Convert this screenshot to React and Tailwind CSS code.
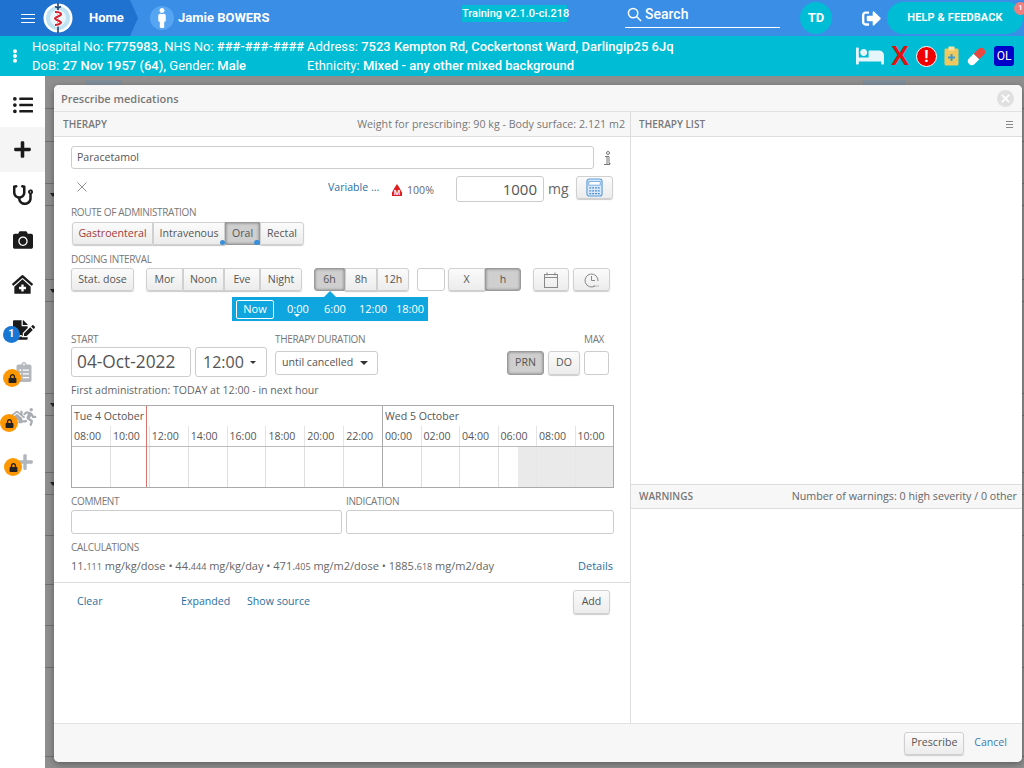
import * as React from "react";
import {
  FaListUl,
  FaPlus,
  FaStethoscope,
  FaCamera,
  FaClinicMedical,
  FaFileSignature,
  FaClipboardList,
  FaRunning,
  FaHome,
  FaLock,
  FaBed,
  FaMale,
  FaSignOutAlt,
  FaEllipsisV,
} from "react-icons/fa";

const backdropRows = [
  { id: 1, className: "h-[33px]" },
  { id: 2, className: "h-[33px]" },
  { id: 3, className: "h-[42px]" },
  { id: 4, className: "h-[22px]", arrow: true },
  { id: 5, className: "h-[74px]" },
  { id: 6, className: "h-[22px]", arrow: true },
  { id: 7, className: "h-[92px]" },
  { id: 8, className: "h-[22px]", arrow: true },
  { id: 9, className: "h-[57px]" },
  { id: 10, className: "h-[22px]", arrow: true },
  { id: 11, className: "h-[41px]" },
  { id: 12, className: "h-[49px]" },
  { id: 13, className: "h-[41px]" },
  { id: 14, className: "h-[42px]" },
  { id: 15, className: "h-[89px]" },
];

const hours = [
  ["08:00", "10:00", "12:00", "14:00", "16:00", "18:00", "20:00", "22:00"],
  ["00:00", "02:00", "04:00", "06:00", "08:00", "10:00"],
];

const Btn = ({ className = "", active = false, children }) => (
  <div
    className={
      "flex items-center justify-center text-[10.6px] text-[#555] border h-full " +
      (active
        ? "bg-[#cfcfcf] border-[#9a9a9a] shadow-[inset_0_0_3px_#777] "
        : "bg-gradient-to-b from-[#fbfbfb] to-[#ececec] border-[#d0d0d0] shadow-[0_1px_1px_#ccc] ") +
      className
    }
  >
    {children}
  </div>
);

const Label = ({ className = "", children }) => (
  <div className={"text-[10px] leading-[12px] text-[#777] uppercase tracking-[-0.35px] " + className}>
    {children}
  </div>
);

const Logo = () => (
  <svg viewBox="0 0 30 30" className="w-[30px] h-[30px]">
    <circle cx="15" cy="15" r="14.5" fill="#fff" />
    <circle cx="15" cy="15" r="12" fill="#bfe3f2" />
    <circle cx="15" cy="15" r="8" fill="#eaf6fb" />
    <path d="M15 0v30" stroke="#24466e" strokeWidth="1.6" />
    <path d="M12 9c4 0 6 1 6 2.5S12 14 12 15.5 18 18 18 19.5 14 22 12 22" stroke="#fff" strokeWidth="4" fill="none" />
    <path d="M12 9c4 0 6 1 6 2.5S12 14 12 15.5 18 18 18 19.5 14 22 12 22" stroke="#d5232f" strokeWidth="2.2" fill="none" />
    <path d="M12 3.5l3 1.5 3-1.5" stroke="#24466e" strokeWidth="1.4" fill="none" />
  </svg>
);

const CalcIcon = () => (
  <svg viewBox="0 0 18 20" className="w-[17px] h-[19px]">
    <rect x="1" y="1" width="16" height="18" rx="2.5" fill="#dbe9f8" stroke="#5b9bd8" strokeWidth="1.2" />
    <rect x="3" y="3.5" width="12" height="4" fill="#fff" stroke="#5b9bd8" strokeWidth="0.8" />
    <path d="M3.5 10.5h11M3.5 13.5h11M3.5 16.5h11" stroke="#4a8cd0" strokeWidth="1.3" strokeDasharray="2 1" />
  </svg>
);

const PillIcon = () => (
  <svg viewBox="0 0 24 24" className="w-[21px] h-[21px]">
    <g transform="rotate(-45 12 12)">
      <path d="M12 7.5H4.5a4.5 4.5 0 0 0 0 9H12z" fill="#fff" />
      <path d="M12 7.5h7.5a4.5 4.5 0 0 1 0 9H12z" fill="#e9473f" />
    </g>
  </svg>
);

const ClipIcon = () => (
  <svg viewBox="0 0 15 20" className="w-[15px] h-[20px]">
    <rect x="0.5" y="2.5" width="14" height="17" rx="1.5" fill="#efc95d" />
    <rect x="4.5" y="0.5" width="6" height="4" fill="#f7e3a2" />
    <path d="M7.5 8v7M4 11.5h7" stroke="#3f9bc4" strokeWidth="2" />
  </svg>
);

const MedalIcon = () => (
  <svg viewBox="0 0 12 12" className="w-[12px] h-[12px]">
    <path d="M6 0l2 3 3 5.5V12H1V8.5L4 3z" fill="#e01e1e" />
    <text x="6" y="11" textAnchor="middle" fontSize="7" fontWeight="700" fill="#fff">
      M
    </text>
  </svg>
);

const CalendarIcon = () => (
  <svg viewBox="0 0 16 16" className="w-[16px] h-[16px]" fill="none" stroke="#888" strokeWidth="1">
    <rect x="1.5" y="2.5" width="13" height="13" />
    <path d="M1.5 5.5h13M4 0.5v3M12 0.5v3" />
  </svg>
);

const ClockIcon = () => (
  <svg viewBox="0 0 16 16" className="w-[16px] h-[16px]" fill="none" stroke="#888" strokeWidth="1">
    <path d="M11 14a6.5 6.5 0 1 1 3-5" />
    <path d="M7.5 4v4.5h3.5" />
    <path d="M9.5 14h5" strokeDasharray="1 1" />
  </svg>
);

const InfoIcon = () => (
  <svg viewBox="0 0 8 14" className="w-[8px] h-[14px]" fill="none" stroke="#777" strokeWidth="1">
    <circle cx="5" cy="2" r="1.5" />
    <path d="M2 5.5h4v7H7.5M1 13.5h6M4 6v7" />
  </svg>
);

const Sidebar = () => (
  <div className="w-[45px] shrink-0 bg-white pt-[6px] flex flex-col text-[#1b1b1b]">
    <div className="h-[45px] flex items-center justify-center text-[20px]">
      <FaListUl />
    </div>
    <div className="h-[45px] flex items-center justify-center text-[19px] bg-[#f5f5f5]">
      <FaPlus />
    </div>
    <div className="h-[45px] flex items-center justify-center text-[20px]">
      <FaStethoscope />
    </div>
    <div className="h-[45px] flex items-center justify-center text-[20px]">
      <FaCamera />
    </div>
    <div className="h-[45px] flex items-center justify-center text-[21px]">
      <FaClinicMedical />
    </div>
    <div className="relative h-[45px] flex items-center justify-center text-[22px] pl-[2px]">
      <FaFileSignature />
      <div className="absolute left-[3px] top-[19px] w-[17px] h-[17px] rounded-full bg-[#1976d2] text-white text-[11px] font-bold flex items-center justify-center font-['Roboto',sans-serif]">
        1
      </div>
    </div>
    <div className="relative h-[45px] flex items-center justify-center text-[20px] pl-[3px] pb-[6px] text-[#b4b8bd]">
      <FaClipboardList />
      <div className="absolute left-[3px] top-[17px] w-[18px] h-[18px] rounded-full bg-[#ff9800] text-[#222] text-[9px] flex items-center justify-center">
        <FaLock />
      </div>
    </div>
    <div className="relative h-[45px] flex items-center justify-center text-[18px] pl-[2px] pb-[5px] text-[#a9adb2]">
      <FaHome className="text-[16px] mr-[-5px]" />
      <FaRunning />
      <div className="absolute left-0 top-[17px] w-[18px] h-[18px] rounded-full bg-[#ff9800] text-[#222] text-[9px] flex items-center justify-center">
        <FaLock />
      </div>
    </div>
    <div className="relative h-[45px] flex items-center justify-center text-[18px] pl-[5px] pb-[6px] text-[#b0b6bc]">
      <FaPlus />
      <div className="absolute left-[4px] top-[16px] w-[18px] h-[18px] rounded-full bg-[#ff9800] text-[#222] text-[9px] flex items-center justify-center">
        <FaLock />
      </div>
    </div>
  </div>
);

const Header = () => (
  <div className="h-9 bg-[#3a8ee6] flex items-center text-white font-['Roboto',sans-serif] shrink-0">
    <div className="w-[138px] h-full bg-[#1f72cf] [clip-path:polygon(0_0,130px_0,100%_50%,130px_100%,0_100%)] flex items-center shrink-0">
      <div className="ml-[21px] w-[14px] flex flex-col gap-[3px]">
        <div className="h-px bg-white" />
        <div className="h-px bg-white" />
        <div className="h-px bg-white" />
      </div>
      <div className="ml-[8px]">
        <Logo />
      </div>
      <div className="ml-[16px] text-[13px] font-bold">Home</div>
    </div>
    <div className="ml-[12px] w-[24px] h-[24px] rounded-full bg-[#56a5f2] flex items-center justify-center text-[20px] shrink-0">
      <FaMale />
    </div>
    <div className="ml-[4px] text-[13px] font-bold w-[284px] whitespace-nowrap">Jamie BOWERS</div>
    <div className="w-[163px] h-full pt-[5px] shrink-0">
      <div className="w-[105px] h-[17px] bg-[#00bcd4] text-[11px] leading-[17px] font-medium whitespace-nowrap text-center">
        Training v2.1.0-ci.218
      </div>
    </div>
    <div className="w-[155px] h-[27px] border-b border-white flex items-center gap-[3px] pl-[2px] pt-[1px] shrink-0 text-[14px] font-medium self-start mt-[1px]">
      <svg viewBox="0 0 16 16" className="w-[15px] h-[15px]" fill="none" stroke="#fff" strokeWidth="1.6">
        <circle cx="6.5" cy="6.5" r="5" />
        <path d="M10.2 10.2L15 15" />
      </svg>
      Search
    </div>
    <div className="ml-[20px] w-[32px] h-[32px] rounded-full bg-[#00bcd4] flex items-center justify-center text-[13px] font-bold shrink-0">
      TD
    </div>
    <div className="ml-[30px] text-[19px] shrink-0">
      <FaSignOutAlt />
    </div>
    <div className="relative ml-[6px] w-[136px] h-[32px] rounded-full bg-[#00bcd4] flex items-center justify-center text-[11px] font-bold tracking-[0.1px] shrink-0">
      HELP &amp; FEEDBACK
      <div className="absolute right-[-4px] top-0 w-[13px] h-[13px] rounded-full bg-[#ef7f7f] text-[7px] flex items-center justify-center">
        1
      </div>
    </div>
  </div>
);

const PatientBar = () => (
  <div className="h-10 bg-[#00bcd4] flex items-center text-white text-[13px] leading-[19px] font-['Roboto',sans-serif] shrink-0 whitespace-nowrap">
    <div className="w-[32px] flex justify-center text-[14px] shrink-0 pr-[2px]">
      <FaEllipsisV />
    </div>
    <div className="w-[275px] shrink-0">
      <div>
        Hospital No: <span className="font-medium">F775983,</span> NHS No: <span className="font-medium">###-###-####</span>
      </div>
      <div>
        DoB: <span className="font-medium">27 Nov 1957 (64),</span> Gender: <span className="font-medium">Male</span>
      </div>
    </div>
    <div className="w-[516px] shrink-0">
      <div>
        Address: <span className="font-medium">7523 Kempton Rd, Cockertonst Ward, Darlingip25 6Jq</span>
      </div>
      <div>
        Ethnicity: <span className="font-medium">Mixed - any other mixed background</span>
      </div>
    </div>
    <div className="flex items-center gap-[7px] shrink-0 pl-[33px]">
      <FaBed className="text-[#e5f5fa] text-[28px]" />
      <span className="text-[#e01212] text-[27px] leading-none font-bold font-['Liberation_Sans',sans-serif]">X</span>
      <div className="w-[21px] h-[21px] rounded-full bg-[#f00000] border border-white flex items-center justify-center text-[16px] font-bold">
        !
      </div>
      <ClipIcon />
      <PillIcon />
      <div className="w-[20px] h-[20px] rounded-[3px] bg-[#0000c8] flex items-center justify-center text-[12px]">
        OL
      </div>
    </div>
  </div>
);

const Timeline = () => (
  <div className="relative mt-[7px] w-[543px] h-[83px] border border-[#aaa] flex text-[10.6px] text-[#555]">
    <div className="w-[311px] border-r border-[#aaa] flex flex-col shrink-0">
      <div className="h-[20px] leading-[20px] pl-[2px]">Tue 4 October</div>
      <div className="h-[21px] flex border-b border-[#bbb]">
        {hours[0].map((hour) => (
          <div key={hour} className="flex-1 border-r last:border-r-0 border-[#e4e4e4] pl-[2px] leading-[21px]">
            {hour}
          </div>
        ))}
      </div>
      <div className="flex-1 flex">
        {hours[0].map((hour) => (
          <div key={hour} className="flex-1 border-r last:border-r-0 border-[#dedede]" />
        ))}
      </div>
    </div>
    <div className="flex-1 flex flex-col">
      <div className="h-[20px] leading-[20px] pl-[2px]">Wed 5 October</div>
      <div className="h-[21px] flex border-b border-[#bbb]">
        {hours[1].map((hour) => (
          <div key={hour} className="flex-1 border-r last:border-r-0 border-[#e4e4e4] pl-[2px] leading-[21px]">
            {hour}
          </div>
        ))}
      </div>
      <div className="flex-1 flex">
        {hours[1].map((hour) => (
          <div key={hour} className="flex-1 border-r last:border-r-0 border-[#dedede]" />
        ))}
      </div>
    </div>
    <div className="absolute left-[74px] top-0 bottom-0 w-px bg-[#d9736b]" />
    <div className="absolute left-[446px] right-0 top-[41px] bottom-0 bg-[#e8e8e8]/90" />
  </div>
);

const TherapyPane = () => (
  <div className="w-[577px] shrink-0 border-r border-[#ddd] flex flex-col">
    <div className="h-[25px] px-[9px] bg-[#f7f7f7] border-b border-[#ddd] flex items-center justify-between shrink-0">
      <div className="text-[10px] font-semibold text-[#777]">THERAPY</div>
      <div className="text-[10.7px] text-[#777] mr-[-4px]">Weight for prescribing: 90 kg - Body surface: 2.121 m2</div>
    </div>
    <div className="pl-[17px] pr-[16px] pt-[9px] shrink-0">
      <div className="flex items-center">
        <div className="w-[523px] h-[23px] border border-[#ccc] rounded-[3px] pl-[5px] text-[10.6px] leading-[20px] text-[#555]">
          Paracetamol
        </div>
        <div className="ml-[9px] flex">
          <InfoIcon />
        </div>
      </div>
      <div className="flex items-start mt-[7px] h-[26px]">
        <svg viewBox="0 0 10 10" className="w-[10px] h-[10px] ml-[6px] mt-[6px]" fill="none" stroke="#888" strokeWidth="0.9">
          <path d="M0.5 0.5l9 9M9.5 0.5l-9 9" />
        </svg>
        <div className="ml-[241px] w-[50px] text-[10.6px] leading-[22px] text-[#2b6f9f] whitespace-nowrap">Variable ...</div>
        <div className="ml-[13px] mt-[8px] flex">
          <MedalIcon />
        </div>
        <div className="ml-[4px] w-[28px] text-[10.6px] leading-[28px] text-[#666]">100%</div>
        <div className="ml-[21px] w-[88px] h-[26px] border border-[#ccc] rounded-[3px] text-right pr-[6px] text-[15px] leading-[24px] text-[#555]">
          1000
        </div>
        <div className="ml-[4px] w-[24px] text-[14px] leading-[26px] text-[#666]">mg</div>
        <div className="ml-[4px] h-[23px] w-[37px] rounded-[2px]">
          <Btn className="rounded-[3px]">
            <CalcIcon />
          </Btn>
        </div>
      </div>
      <Label className="mt-[4px]">Route of administration</Label>
      <div className="flex h-[23px] mt-[4px] ml-[1px] w-fit">
        <Btn className="w-[81px] rounded-l-[3px] !text-[#a23a3a]">Gastroenteral</Btn>
        <div className="relative w-[72px] h-full">
          <Btn>Intravenous</Btn>
          <div className="absolute right-0 bottom-0 w-[5px] h-[5px] rounded-full bg-[#3b8fd8]" />
        </div>
        <div className="relative w-[35px] h-full">
          <Btn active>Oral</Btn>
          <div className="absolute right-0 bottom-0 w-[6px] h-[5px] rounded-full bg-[#3b8fd8]" />
        </div>
        <Btn className="w-[44px] rounded-r-[3px]">Rectal</Btn>
      </div>
      <Label className="mt-[8px]">Dosing interval</Label>
      <div className="flex h-[23px] mt-[3px]">
        <Btn className="w-[63px] rounded-[3px]">Stat. dose</Btn>
        <Btn className="ml-[12px] w-[37px] rounded-l-[3px]">Mor</Btn>
        <Btn className="w-[41px]">Noon</Btn>
        <Btn className="w-[36px]">Eve</Btn>
        <Btn className="w-[42px] rounded-r-[3px]">Night</Btn>
        <Btn active className="ml-[12px] w-[31px] rounded-l-[3px]">6h</Btn>
        <Btn className="w-[32px]">8h</Btn>
        <Btn className="w-[32px] rounded-r-[3px]">12h</Btn>
        <div className="ml-[8px] w-[28px] border border-[#ccc] rounded-[3px]" />
        <Btn className="ml-[3px] w-[37px] rounded-l-[3px]">X</Btn>
        <Btn active className="w-[36px] rounded-r-[3px]">h</Btn>
        <Btn className="ml-[12px] w-[36px] rounded-[3px]">
          <CalendarIcon />
        </Btn>
        <Btn className="ml-[4px] w-[37px] rounded-[3px]">
          <ClockIcon />
        </Btn>
      </div>
      <div className="relative mt-[6px] ml-[161px] w-[196px] h-[24px] bg-[#0fa5df] flex items-center text-white text-[11px]">
        <div className="absolute left-[92px] top-[-6px] w-0 h-0 border-x-[6px] border-x-transparent border-b-[6px] border-b-[#0fa5df]" />
        <div className="ml-[4px] w-[38px] h-[19px] border border-white rounded-[2px] flex items-center justify-center">Now</div>
        <div className="relative ml-[13px] w-[21px]">
          0:00
          <div className="absolute left-[7px] top-[13px] w-0 h-0 border-x-[3px] border-x-transparent border-t-[3px] border-t-white" />
        </div>
        <div className="ml-[16px] w-[21px]">6:00</div>
        <div className="ml-[14px] w-[27px]">12:00</div>
        <div className="ml-[10px] w-[27px]">18:00</div>
      </div>
      <div className="flex mt-[12px]">
        <div>
          <Label>Start</Label>
          <div className="flex mt-[2px]">
            <div className="w-[120px] h-[30px] border border-[#ccc] rounded-[3px] pl-[5px] text-[17.3px] leading-[28px] text-[#555]">
              04-Oct-2022
            </div>
            <div className="ml-[4px] w-[72px] h-[30px] border border-[#ccc] rounded-[3px] pl-[7px] text-[16px] leading-[28px] text-[#555] flex items-center">
              12:00
              <div className="ml-[6px] w-0 h-0 border-x-[3px] border-x-transparent border-t-[3px] border-t-[#333]" />
            </div>
          </div>
        </div>
        <div className="ml-[8px]">
          <Label>Therapy duration</Label>
          <div className="mt-[6px] w-[103px] h-[24px] border border-[#ccc] rounded-[3px] pl-[6px] text-[10.6px] text-[#555] flex items-center">
            until cancelled
            <div className="ml-[7px] w-0 h-0 border-x-[4px] border-x-transparent border-t-[4px] border-t-[#333]" />
          </div>
        </div>
        <div className="ml-[129px] flex flex-col items-end w-[102px]">
          <Label className="w-[25px]">Max</Label>
          <div className="flex h-[24px] mt-[6px]">
            <Btn active className="w-[37px] rounded-[3px]">PRN</Btn>
            <Btn className="ml-[4px] w-[32px] rounded-[3px]">DO</Btn>
            <div className="ml-[4px] w-[25px] border border-[#ccc] rounded-[3px]" />
          </div>
        </div>
      </div>
      <div className="mt-[5px] text-[10.6px] leading-[16px] text-[#666]">First administration: TODAY at 12:00 - in next hour</div>
      <Timeline />
      <div className="flex mt-[7px]">
        <div className="w-[271px]">
          <Label>Comment</Label>
          <div className="mt-[3px] h-[24px] border border-[#ccc] rounded-[3px]" />
        </div>
        <div className="ml-[4px] w-[268px]">
          <Label>Indication</Label>
          <div className="mt-[3px] h-[24px] border border-[#ccc] rounded-[3px]" />
        </div>
      </div>
      <Label className="mt-[7px]">Calculations</Label>
      <div className="mt-[4px] h-[18px] flex justify-between text-[11px] leading-[18px] text-[#666]">
        <div>
          11.<span className="text-[9px]">111</span> mg/kg/dose • 44.<span className="text-[9px]">444</span> mg/kg/day • 471.
          <span className="text-[9px]">405</span> mg/m2/dose • 1885.<span className="text-[9px]">618</span> mg/m2/day
        </div>
        <div className="text-[#2b6f9f] pr-[1px]">Details</div>
      </div>
    </div>
    <div className="mt-[7px] border-t border-[#ddd] h-[38px] flex items-center pl-[23px] pr-[20px] text-[10.6px] text-[#2b6f9f] shrink-0">
      <div className="w-[104px]">Clear</div>
      <div className="w-[66px]">Expanded</div>
      <div>Show source</div>
      <div className="ml-auto w-[37px] h-[24px] text-[#555]">
        <Btn className="rounded-[3px]">Add</Btn>
      </div>
    </div>
  </div>
);

const RightPane = () => (
  <div className="flex-1 flex flex-col">
    <div className="h-[25px] pl-[8px] pr-[9px] bg-[#f7f7f7] border-b border-[#ddd] flex items-center justify-between shrink-0">
      <div className="text-[10px] font-semibold text-[#777]">THERAPY LIST</div>
      <div className="w-[7px] flex flex-col gap-[2px]">
        <div className="h-px bg-[#888]" />
        <div className="h-px bg-[#888]" />
        <div className="h-px bg-[#888]" />
      </div>
    </div>
    <div className="h-[347px] shrink-0" />
    <div className="h-[25px] pl-[8px] pr-[5px] bg-[#f7f7f7] border-y border-[#ddd] flex items-center justify-between shrink-0">
      <div className="text-[10px] font-semibold text-[#777]">WARNINGS</div>
      <div className="text-[10.7px] text-[#666]">Number of warnings: 0 high severity / 0 other</div>
    </div>
  </div>
);

const Dialog = () => (
  <div className="absolute left-[9px] top-[9px] w-[968px] h-[677px] bg-white rounded-[5px] shadow-[0_2px_6px_rgba(0,0,0,0.35)] flex flex-col overflow-hidden font-['Open_Sans',sans-serif]">
    <div className="h-[27px] bg-[#f7f7f7] border-b border-[#e2e2e2] flex items-center justify-between pl-[7px] pr-[8px] shrink-0">
      <div className="text-[11px] font-semibold text-[#777] pt-[2px]">Prescribe medications</div>
      <div className="w-[17px] h-[17px] rounded-full bg-[#e0e0e0] flex items-center justify-center">
        <svg viewBox="0 0 10 10" className="w-[9px] h-[9px]" fill="none" stroke="#fff" strokeWidth="2">
          <path d="M1 1l8 8M9 1l-8 8" />
        </svg>
      </div>
    </div>
    <div className="flex flex-1 min-h-0">
      <TherapyPane />
      <RightPane />
    </div>
    <div className="h-[39px] bg-[#f7f7f7] border-t border-[#e2e2e2] flex items-center justify-end pr-[15px] text-[10.6px] shrink-0">
      <div className="w-[60px] h-[23px]">
        <Btn className="rounded-[3px]">Prescribe</Btn>
      </div>
      <div className="ml-[10px] text-[#3a7fb5]">Cancel</div>
    </div>
  </div>
);

const App = () => {
  return (
    <div className="w-[1024px] h-[768px] flex flex-col overflow-hidden bg-white">
      <Header />
      <PatientBar />
      <div className="flex flex-1 min-h-0">
        <Sidebar />
        <div className="relative flex-1 bg-[#8e8e8e] overflow-hidden">
          <div className="flex flex-col">
            {backdropRows.map((row) => (
              <div key={row.id} className={"relative border-b border-[#6f6f6f] shrink-0 " + row.className}>
                {row.arrow && (
                  <div className="absolute left-[5px] top-[9px] w-0 h-0 border-x-[3px] border-x-transparent border-t-[4px] border-t-[#222]" />
                )}
              </div>
            ))}
          </div>
          <div className="absolute left-[40px] top-[4px] w-[37px] h-[6px] bg-[#7f8c99]" />
          <div className="absolute left-[818px] top-[4px] w-[42px] h-[6px] bg-[#7f8c99]" />
          <Dialog />
        </div>
      </div>
    </div>
  );
};

export default App;
